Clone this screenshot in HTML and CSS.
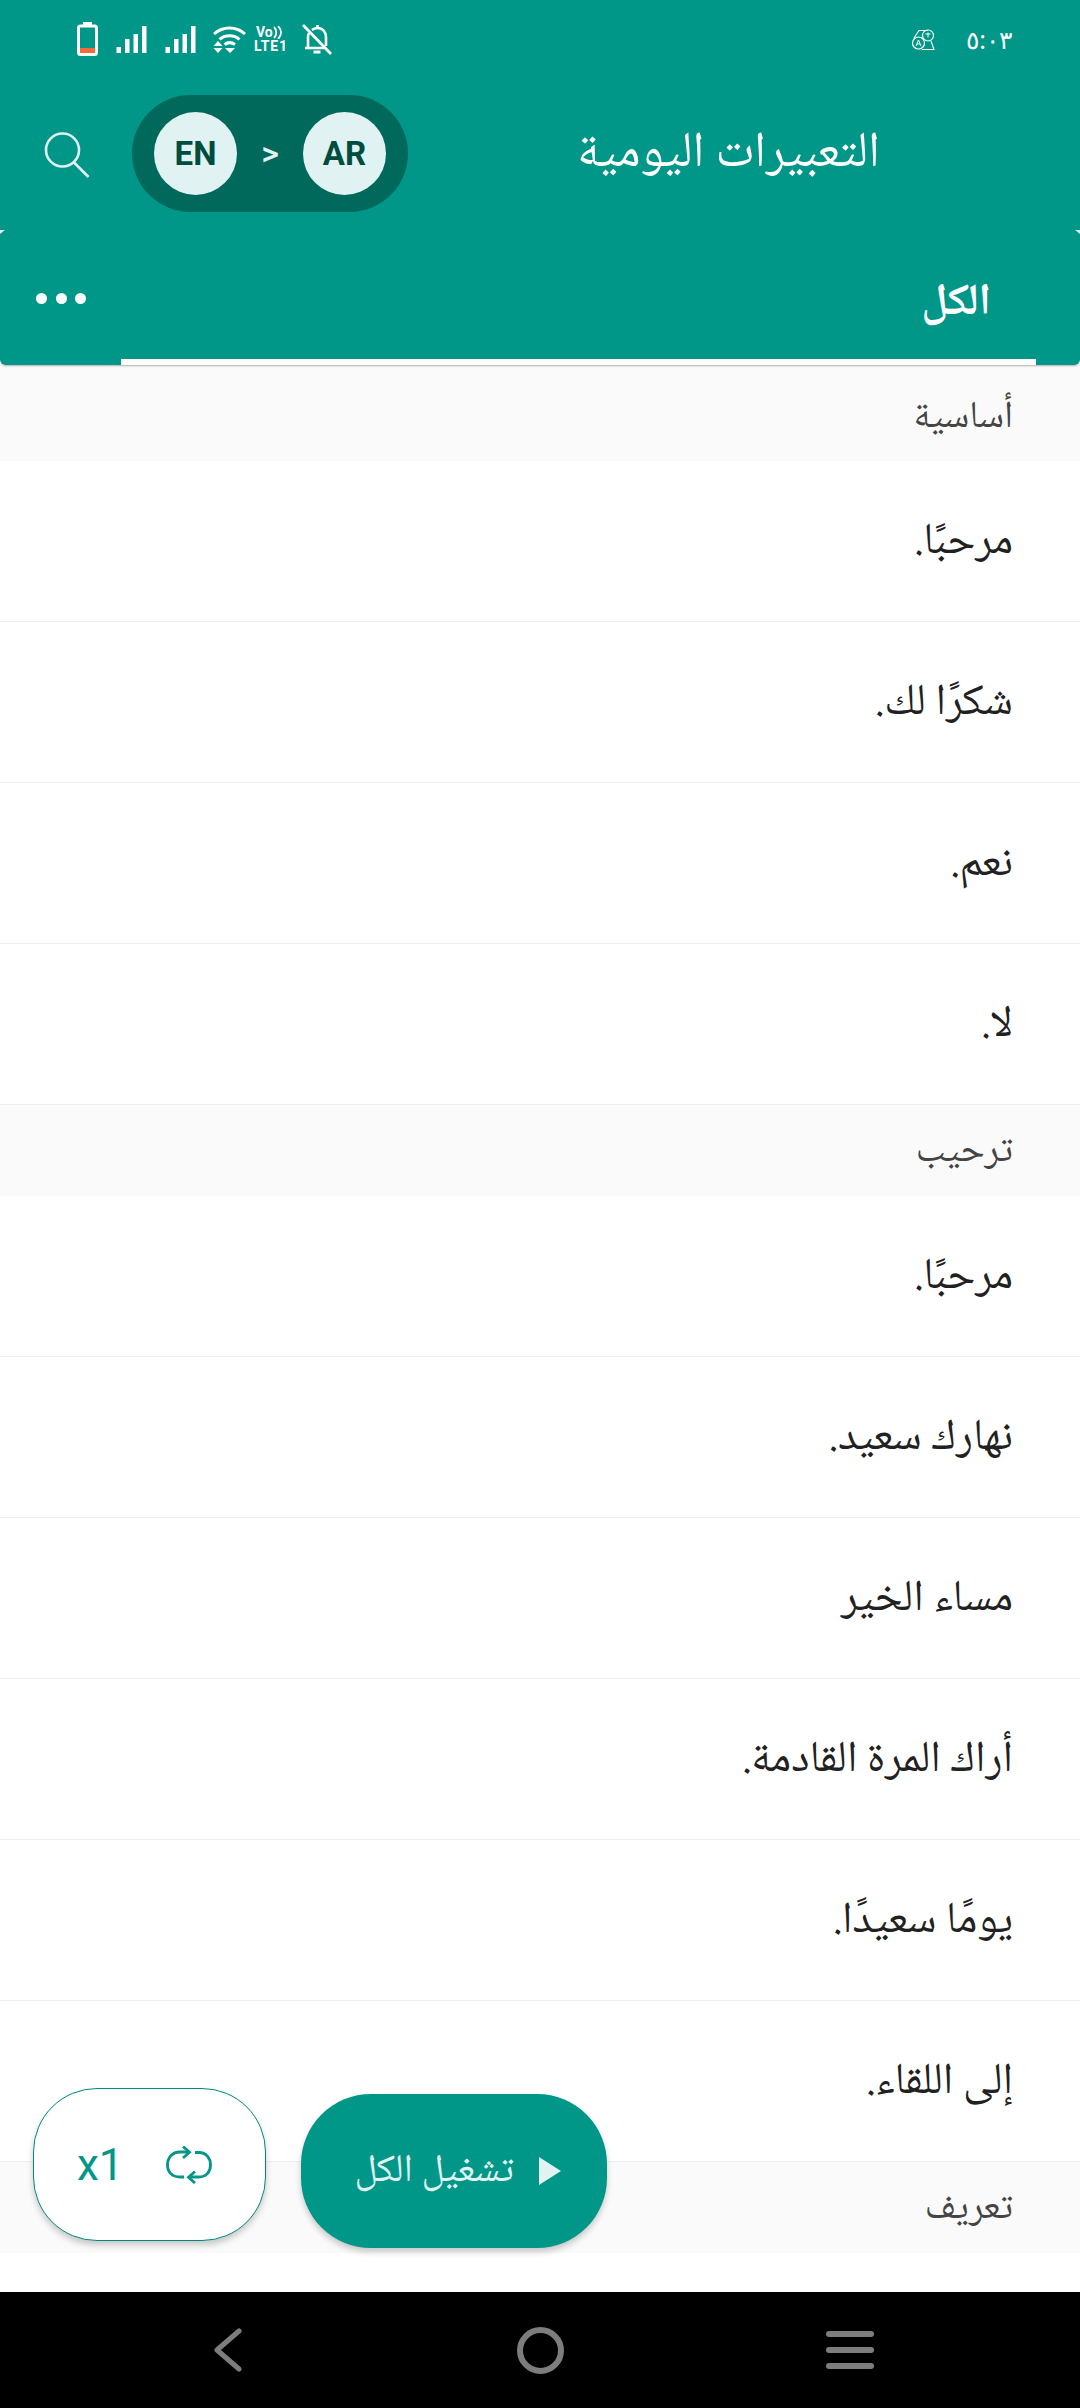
FILE: index.html
```html
<!DOCTYPE html>
<html lang="ar">
<head>
<meta charset="utf-8">
<title>التعبيرات اليومية</title>
<link rel="stylesheet" href="styles.css">
</head>
<body>
<div class="screen">
  <header class="appbar">
    <div class="status">
      <div class="status-left">
        <svg class="ic" width="21" height="34" viewBox="0 0 21 34"><rect x="6" y="0" width="9" height="4" fill="#fff"/><rect x="1.5" y="4" width="18" height="28.5" rx="2" fill="none" stroke="#fff" stroke-width="3"/><rect x="3" y="26" width="15" height="5" fill="#ef6c3a"/></svg>
        <svg class="ic ic-sig" width="31" height="27" viewBox="0 0 31 27"><path d="M.5 21H5v6H.5zM9 13h4.500v14H9zM17.500 8H22v19h-4.500zM26 0h4.500v27H26z" fill="#fff"/></svg>
        <svg class="ic ic-sig2" width="31" height="27" viewBox="0 0 31 27"><path d="M.5 21H5v6H.5zM9 13h4.500v14H9zM17.500 8H22v19h-4.500zM26 0h4.500v27H26z" fill="#fff"/></svg>
        <svg class="ic ic-wifi" width="33" height="27" viewBox="0 0 33 27"><path d="M1 8C10 0 23 0 32 8M6.500 13.500C12 8.500 21 8.500 26.500 13.500M11.500 18.500C15 16 18.500 16 22 18.500" fill="none" stroke="#fff" stroke-width="3"/><path d="M17 27l-5-5h10zM5 15l4.500 5h-9zM5 27L.5 22h9z" fill="#fff"/></svg>
        <span class="volte">
          <span class="vo">Vo<svg width="10" height="13" viewBox="0 0 10 13"><path d="M1 1c3 3 3 8 0 11M5 0c4 4 4 9 0 13" fill="none" stroke="#fff" stroke-width="1.800"/></svg></span>
          <span class="lte">LTE1</span>
        </span>
        <svg class="ic ic-bell" width="30" height="31" viewBox="0 0 30 31"><path d="M1 1l28 29" fill="none" stroke="#fff" stroke-width="2.800"/><path d="M15.500 1v3M10 6c2-1.500 3.500-2 5.500-2 5 0 8.500 4 8.500 9v9M7 9c-.6 1.200-1 2.500-1 4v11h16M3 24h18" fill="none" stroke="#fff" stroke-width="2.600"/><path d="M11.500 28h7" stroke="#fff" stroke-width="3"/></svg>
      </div>
      <div class="status-right">
        <svg class="ic" width="24" height="21" viewBox="0 0 24 21"><path d="M3 9L8 1.500h8.500M20 12l3 8.500H11" fill="none" stroke="#fff" stroke-width="1.100"/><circle cx="7.500" cy="14" r="6" fill="none" stroke="#fff" stroke-width="1.200"/><circle cx="17" cy="6.500" r="5.500" fill="none" stroke="#fff" stroke-width="1.200"/><path d="M5 17l2.500-6 2.500 6M6 15h3M14.500 5h5M17 3.500v5" fill="none" stroke="#fff" stroke-width="1"/></svg>
        <span class="clock">٥:٠٣</span>
      </div>
    </div>
    <div class="toolbar">
      <svg class="search" width="46" height="46" viewBox="0 0 46 46"><circle cx="18.500" cy="18" r="16.500" fill="none" stroke="#e0f2f1" stroke-width="2.600"/><path d="M29.500 30l15 15" stroke="#e0f2f1" stroke-width="2.600"/></svg>
      <div class="lang-pill">
        <span class="lang">EN</span>
        <span class="lang-sep">&gt;</span>
        <span class="lang">AR</span>
      </div>
      <h1 class="title">التعبيرات اليومية</h1>
    </div>
    <nav class="tabs">
      <div class="more"><i></i><i></i><i></i></div>
      <div class="tab">الكل</div>
    </nav>
  </header>

  <main class="list">
    <div class="section section-first">أساسية</div>
    <div class="row">مرحبًا.</div>
    <div class="row">شكرًا لك.</div>
    <div class="row">نعم.</div>
    <div class="row">لا.</div>
    <div class="section">ترحيب</div>
    <div class="row">مرحبًا.</div>
    <div class="row">نهارك سعيد.</div>
    <div class="row">مساء الخير</div>
    <div class="row">أراك المرة القادمة.</div>
    <div class="row">يومًا سعيدًا.</div>
    <div class="row">إلى اللقاء.</div>
    <div class="section">تعريف</div>
  </main>

  <div class="fabs">
    <div class="fab-repeat">
      <span class="times">x1</span>
      <svg width="46" height="38" viewBox="0 0 46 38"><path d="M23 6H14C6 6 1.500 12 1.500 19S6 31 14 31H18M29 6.500H33C40 6.500 44.500 12 44.500 19S40 31 33 31H23" fill="none" stroke="#009688" stroke-width="2.800"/><path d="M17 0.500L23.500 6.200L17 12M29 25.500L22.500 31.300L29 37" fill="none" stroke="#009688" stroke-width="2.800"/></svg>
    </div>
    <div class="fab-play">
      <svg width="22" height="28" viewBox="0 0 22 28"><path d="M0 0l22 14L0 28z" fill="#e0f2f1"/></svg>
      <span class="fab-label">تشغيل الكل</span>
    </div>
  </div>

  <footer class="navbar">
    <svg width="28" height="44" viewBox="0 0 28 44"><path d="M25 3L3 22l22 19" fill="none" stroke="#7d7d7d" stroke-width="5" stroke-linecap="round" stroke-linejoin="round"/></svg>
    <svg class="nav-home" width="47" height="47" viewBox="0 0 47 47"><circle cx="23.500" cy="23.500" r="20.500" fill="none" stroke="#7d7d7d" stroke-width="6"/></svg>
    <svg class="nav-menu" width="48" height="38" viewBox="0 0 48 38"><path d="M3 3h42M3 19h42M3 35h42" stroke="#7d7d7d" stroke-width="6" stroke-linecap="round"/></svg>
  </footer>
</div>
</body>
</html>
```
FILE: styles.css
```css
* { box-sizing: border-box; }
html, body { margin: 0; padding: 0; }
body { font-family: "Noto Naskh Arabic", "Noto Sans", serif; background: #fff; }
.screen { width: 1080px; height: 2408px; position: relative; overflow: hidden; display: flex; flex-direction: column; }

/* Teal app bar: status row, toolbar, tab strip */
.appbar { height: 365px; flex: none; background: #009688; border-radius: 0 0 6px 6px; box-shadow: 0 1px 2px rgba(0,0,0,.3); position: relative; z-index: 1; }
.status { height: 74px; display: flex; justify-content: space-between; align-items: center; padding: 4px 68px 0 77px; }
.status-left, .status-right { display: flex; align-items: center; }
.ic { display: block; }
.ic-sig { margin-left: 18px; }
.ic-sig2 { margin-left: 18px; }
.ic-wifi { margin-left: 17px; }
.volte { margin-left: 8px; width: 36px; display: flex; flex-direction: column; color: #fff; font: 700 14px/14px Roboto, sans-serif; }
.vo { display: flex; align-items: center; padding-left: 2px; }
.lte { letter-spacing: .8px; }
.ic-bell { margin-left: 12px; }
.status-right { gap: 31px; }
.clock { color: #fff; font: 400 25px/30px "Noto Sans", sans-serif; }

.toolbar { height: 158px; display: flex; align-items: center; padding: 0 200px 0 44px; }
.search { flex: none; margin-top: 3px; }
.lang-pill { margin-left: 42px; width: 276px; height: 117px; flex: none; border-radius: 59px; background: #00695c; display: flex; align-items: center; justify-content: space-between; padding: 0 22px; }
.lang { width: 83px; height: 83px; border-radius: 50%; background: #e0f2f1; color: #004d40; font: 700 33px/83px Roboto, sans-serif; text-align: center; }
.lang-sep { color: #e0f2f1; font: 500 34px/1 Roboto, sans-serif; }
.title { margin: 5px 0 0 auto; color: #fff; font-size: 50px; font-weight: 400; line-height: 60px; }

.tabs { height: 133px; display: flex; padding-right: 44px; position: relative; }
/* tiny light wedges where the strip meets the screen edges */
.tabs::before, .tabs::after { content: ""; position: absolute; top: -2px; width: 5px; height: 4px; background: #d8f0ee; }
.tabs::before { left: 0; clip-path: polygon(0 0, 100% 0, 0 100%); }
.tabs::after { right: 0; clip-path: polygon(0 0, 100% 0, 100% 100%); }
.more { width: 121px; flex: none; padding: 61px 0 0 36px; display: flex; gap: 8.500px; }
.more i { width: 11px; height: 11px; border-radius: 50%; background: #fff; }
.tab { flex: 1; border-bottom: 6px solid #fff; color: #fff; font-size: 44px; font-weight: 700; line-height: 60px; text-align: right; padding: 43px 45px 0 0; }

/* Phrase list */
.list { flex: 1; min-height: 0; overflow: hidden; direction: rtl; }
.section { height: 91px; background: #fafafa; color: #444; font-size: 38px; line-height: 91px; padding: 2px 67px 0; }
.section-first { height: 96px; padding-top: 8px; }
.row { height: 161px; border-bottom: 1px solid #eeeeee; color: #212121; font-size: 44px; line-height: 160px; padding: 3px 67px 0; }

/* Floating controls */
.fabs { position: absolute; left: 33px; top: 2088px; z-index: 2; display: flex; gap: 35px; align-items: flex-start; }
.fab-repeat { width: 233px; height: 153px; background: #fff; border: 1px solid #00897b; border-radius: 64px; box-shadow: 0 4px 6px rgba(0,0,0,.2); display: flex; align-items: center; justify-content: space-between; padding: 0 53px 0 43px; color: #009688; }
.times { font: 400 44px/1 Roboto, sans-serif; }
.fab-play { margin-top: 6px; width: 306px; height: 154px; background: #009688; border-radius: 70px; box-shadow: 0 4px 6px rgba(0,0,0,.2); display: flex; align-items: center; gap: 25px; padding-right: 46px; color: #e0f2f1; font-size: 39px; direction: rtl; }
.fab-label { padding-top: 3px; }

/* System navigation */
.navbar { height: 116px; flex: none; background: #000; display: flex; align-items: center; padding-left: 214px; }
.nav-home { margin-left: 275px; }
.nav-menu { margin-left: 262px; }
```
